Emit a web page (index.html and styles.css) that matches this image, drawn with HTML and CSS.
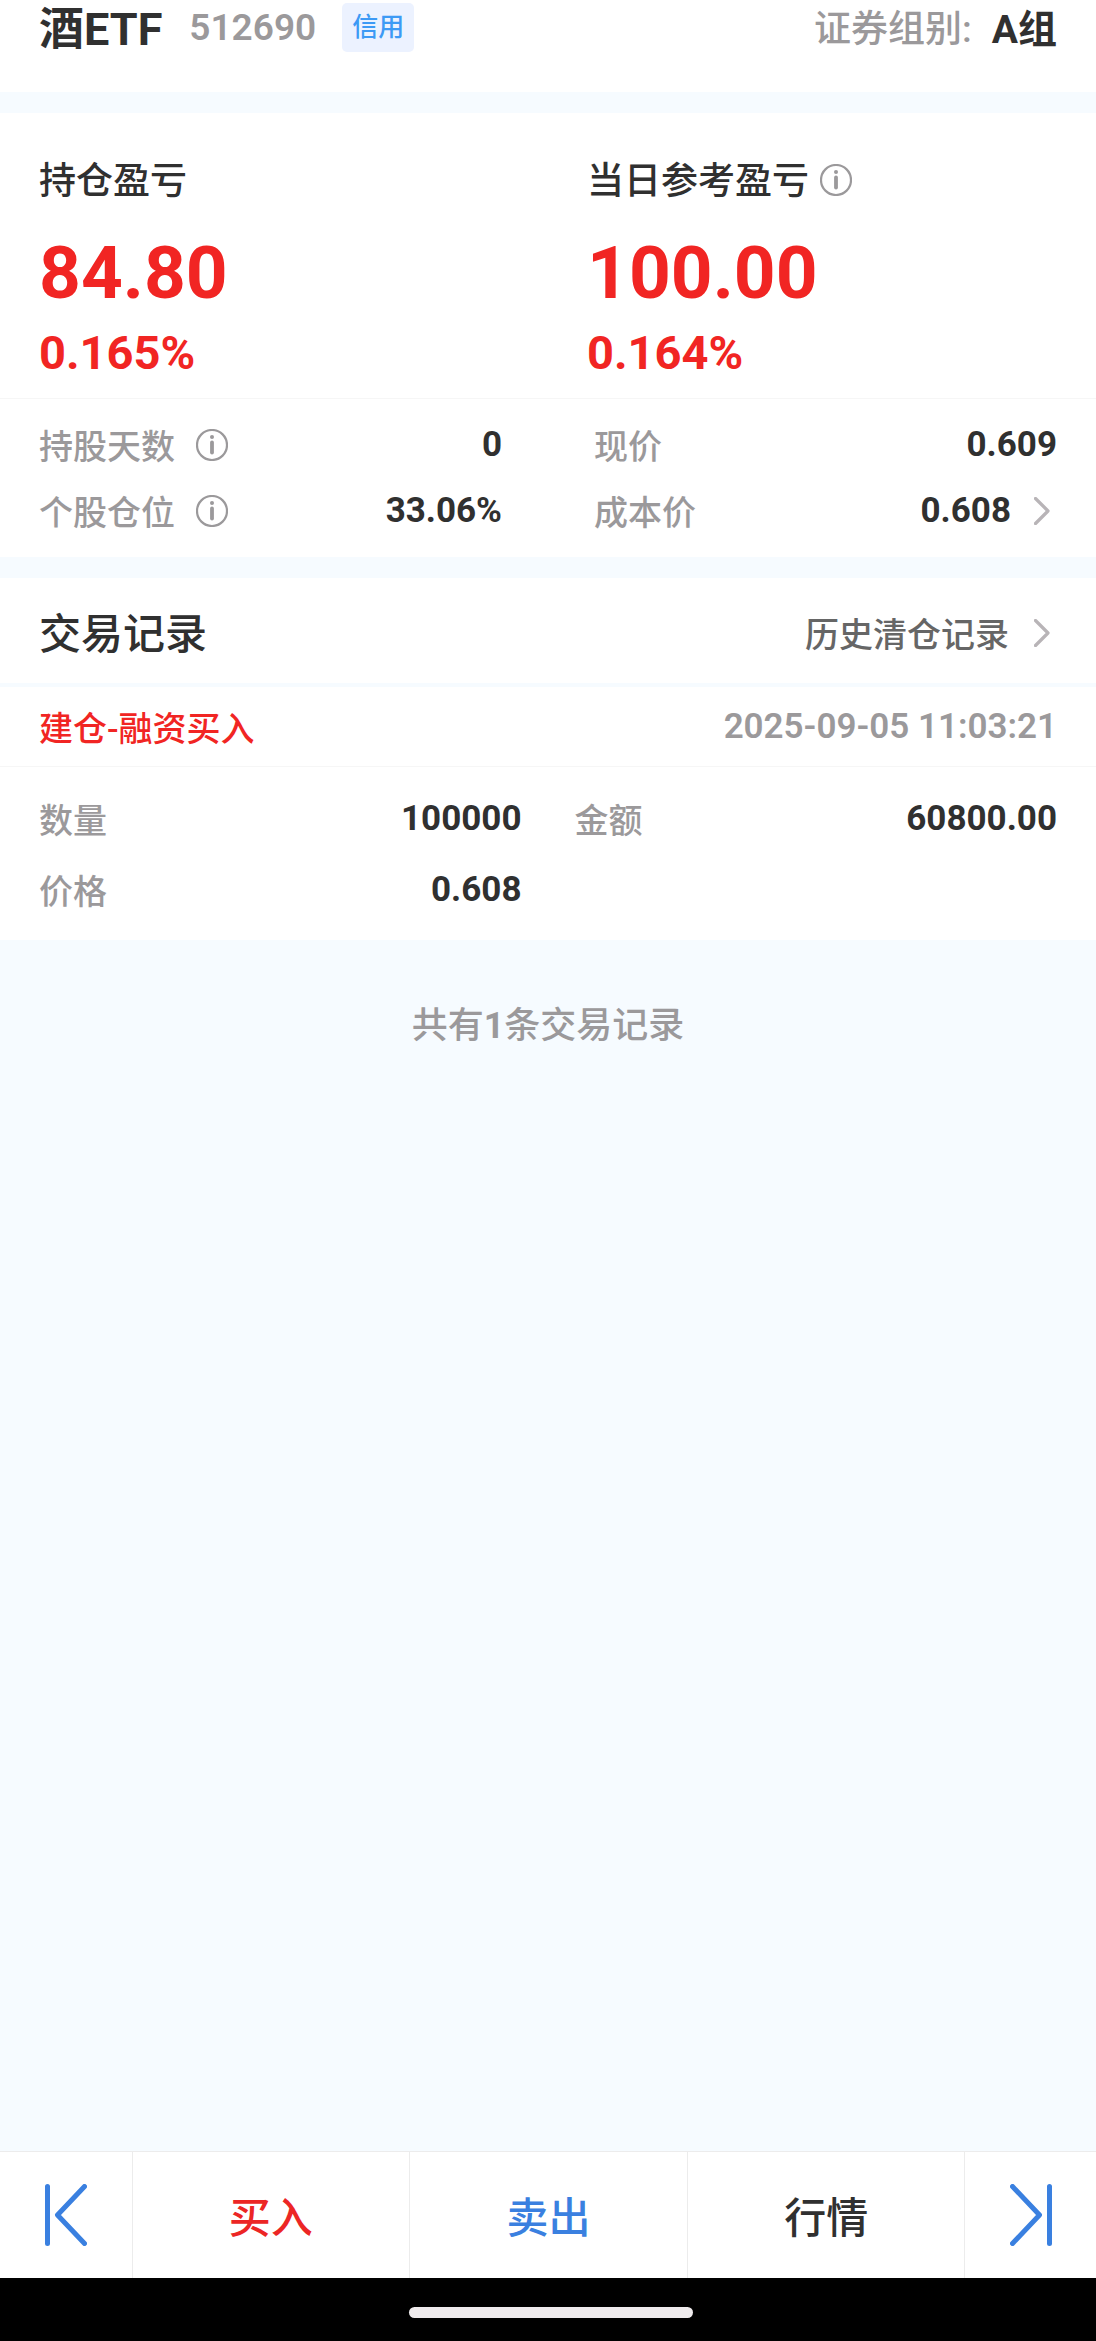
FILE: index.html
```
<!DOCTYPE html>
<html lang="zh-CN">
<head>
  <meta charset="UTF-8">
  <meta name="viewport" content="width=device-width, initial-scale=1">
  <title>酒ETF 512690</title>
  <link rel="stylesheet" href="styles.css">
</head>
<body>

<svg class="sprite" aria-hidden="true">
  <symbol id="icon-info" viewBox="0 0 32 32">
    <circle cx="16" cy="16" r="15" fill="none" stroke="currentColor" stroke-width="2.200"/>
    <circle cx="16" cy="8" r="2" fill="currentColor"/>
    <path d="M16 13.500v10" fill="none" stroke="currentColor" stroke-width="3.800" stroke-linecap="round"/>
  </symbol>
  <symbol id="icon-arrow" viewBox="0 0 16 28">
    <path d="M1.500 1.500 14 14 1.500 26.500" fill="none" stroke="currentColor" stroke-width="3.200" stroke-linecap="round" stroke-linejoin="round"/>
  </symbol>
</svg>

<header class="header">
  <h1 class="name">酒ETF</h1>
  <span class="code">512690</span>
  <span class="tag">信用</span>
  <span class="group">证券组别:</span>
  <strong class="group-name">A组</strong>
</header>

<main class="content">
  <section class="card">
    <div class="profit">
      <div class="profit-item">
        <h2 class="profit-title">持仓盈亏</h2>
        <p class="profit-value">84.80</p>
        <p class="profit-rate">0.165%</p>
      </div>
      <div class="profit-item">
        <h2 class="profit-title">当日参考盈亏
          <button class="info" type="button" aria-label="当日参考盈亏说明"><svg><use href="#icon-info"/></svg></button>
        </h2>
        <p class="profit-value">100.00</p>
        <p class="profit-rate">0.164%</p>
      </div>
    </div>
    <dl class="stats">
      <div class="row">
        <dt>持股天数 <button class="info" type="button" aria-label="持股天数说明"><svg><use href="#icon-info"/></svg></button></dt>
        <dd>0</dd>
      </div>
      <div class="row">
        <dt>现价</dt>
        <dd>0.609</dd>
      </div>
      <div class="row">
        <dt>个股仓位 <button class="info" type="button" aria-label="个股仓位说明"><svg><use href="#icon-info"/></svg></button></dt>
        <dd>33.06%</dd>
      </div>
      <div class="row">
        <dt>成本价</dt>
        <dd><a class="more" href="#cost">0.608 <svg class="arrow"><use href="#icon-arrow"/></svg></a></dd>
      </div>
    </dl>
  </section>

  <section class="card">
    <div class="records-head">
      <h2 class="records-title">交易记录</h2>
      <a class="more history" href="#history">历史清仓记录 <svg class="arrow"><use href="#icon-arrow"/></svg></a>
    </div>
    <div class="record-top">
      <h3 class="record-type">建仓-融资买入</h3>
      <time class="record-time" datetime="2025-09-05T11:03:21">2025-09-05 11:03:21</time>
    </div>
    <dl class="record-detail">
      <div class="row">
        <dt>数量</dt>
        <dd>100000</dd>
      </div>
      <div class="row">
        <dt>金额</dt>
        <dd>60800.00</dd>
      </div>
      <div class="row">
        <dt>价格</dt>
        <dd>0.608</dd>
      </div>
    </dl>
  </section>

  <p class="total">共有<b>1</b>条交易记录</p>
</main>

<nav class="toolbar">
  <button class="step" type="button" aria-label="上一只">
    <svg viewBox="0 0 42 62"><path d="M2.500 2.500v57M39.500 2.500 12.500 31l27 28.500"/></svg>
  </button>
  <button class="action buy" type="button">买入</button>
  <button class="action sell" type="button">卖出</button>
  <button class="action" type="button">行情</button>
  <button class="step" type="button" aria-label="下一只">
    <svg viewBox="0 0 42 62"><path d="M39.500 2.500v57M2.500 2.500 29.500 31l-27 28.500"/></svg>
  </button>
</nav>
<div class="home-bar"><span></span></div>

</body>
</html>
```
FILE: styles.css
```
* {
  box-sizing: border-box;
}
body {
  display: flex;
  flex-direction: column;
  min-height: 100vh;
  margin: 0;
  background-color: #f6fbff;
  color: #303030;
  font-family: Roboto, "Noto Sans CJK SC", sans-serif;
  font-size: 34px;
  font-weight: 500;
}
h1, h2, h3, p, dl, dd {
  margin: 0;
  font-weight: 500;
}
button {
  padding: 0;
  border: none;
  background: none;
  color: inherit;
  font: inherit;
  cursor: pointer;
}
a {
  color: inherit;
  text-decoration: none;
}
.sprite {
  display: none;
}

/* header */
.header {
  display: flex;
  align-items: center;
  height: 92px;
  padding: 0 39px 38px;
  background-color: #fff;
  line-height: 54px;
}
.name {
  padding-top: 5px;
  font-size: 45px;
  font-weight: 700;
}
.code {
  margin-left: 27px;
  padding-top: 2px;
  color: #9b999b;
  font-size: 37px;
  font-weight: 600;
}
.tag {
  margin-left: 26px;
  padding: 0 10px;
  border-radius: 5px;
  background-color: #ecf2ff;
  color: #3d9af5;
  font-size: 26px;
  line-height: 49px;
}
.group {
  margin-left: auto;
  padding-top: 5px;
  color: #9b999b;
  font-size: 37px;
}
.group-name {
  margin-left: 20px;
  padding-top: 5px;
  font-size: 39px;
  font-weight: 700;
}

/* cards */
.content {
  flex: 1;
}
.card {
  margin-top: 21px;
  background-color: #fff;
}
.profit {
  display: grid;
  grid-template-columns: 1fr 1fr;
  padding: 47px 0 17px;
  border-bottom: 1px solid #f6f6f6;
}
.profit-item {
  padding-left: 39px;
}
.profit-title {
  display: flex;
  align-items: center;
  gap: 11px;
  font-size: 37px;
  line-height: 44px;
}
.profit-value {
  margin-top: 25px;
  color: #f12523;
  font-size: 73px;
  font-weight: 700;
  line-height: 88px;
}
.profit-rate {
  margin-top: 8px;
  color: #f12523;
  font-size: 47px;
  font-weight: 700;
  line-height: 56px;
}
.info {
  display: flex;
  margin-bottom: 4px;
  color: #9b999b;
}
.info svg {
  width: 32px;
  height: 32px;
}

/* label / value rows */
.stats,
.record-detail {
  display: grid;
  grid-template-columns: 1fr 1fr;
}
.stats {
  column-gap: 92px;
  padding: 13px 39px;
}
.record-detail {
  column-gap: 53px;
  padding: 16px 39px 15px;
}
.row {
  display: flex;
  align-items: center;
  justify-content: space-between;
  height: 66px;
}
.record-detail .row {
  height: 71px;
}
dt {
  display: flex;
  align-items: center;
  gap: 21px;
  padding-top: 4px;
  color: #9b999b;
  line-height: 40px;
}
dd {
  font-size: 35px;
  font-weight: 700;
  line-height: 40px;
}
.more {
  display: flex;
  align-items: center;
  gap: 23px;
  padding-right: 7px;
}
.arrow {
  width: 16px;
  height: 28px;
  color: #b8b4b7;
}

/* records */
.records-head {
  display: flex;
  align-items: center;
  justify-content: space-between;
  height: 109px;
  padding: 0 39px;
  border-bottom: 4px solid #f6fbff;
}
.records-title {
  font-size: 42px;
}
.history {
  gap: 25px;
  padding-top: 4px;
  color: #666;
}
.record-top {
  display: flex;
  align-items: center;
  justify-content: space-between;
  height: 80px;
  padding: 0 39px;
  border-bottom: 1px solid #f6f6f6;
}
.record-type {
  color: #f12523;
  font-size: 34px;
}
.record-time {
  color: #9b999b;
  font-size: 35px;
  font-weight: 600;
}
.total {
  padding: 62px 0;
  color: #9b999b;
  font-size: 36px;
  line-height: 48px;
  text-align: center;
}

/* bottom toolbar */
.toolbar {
  display: flex;
  height: 127px;
  border-top: 1px solid #ececec;
  background-color: #fff;
}
.toolbar button + button {
  border-left: 1px solid #ececec;
}
.step {
  display: flex;
  align-items: center;
  justify-content: center;
  width: 12%;
  color: #3a80e0;
}
.step svg {
  width: 42px;
  height: 62px;
  fill: none;
  stroke: currentColor;
  stroke-width: 5;
  stroke-linecap: round;
  stroke-linejoin: round;
}
.action {
  flex: 1;
  padding-bottom: 2px;
  font-size: 42px;
}
.buy {
  color: #ec2625;
}
.sell {
  color: #3a80e0;
}
.home-bar {
  display: flex;
  justify-content: center;
  padding: 29px 0 23px 6px;
  background-color: #000;
}
.home-bar span {
  width: 26%;
  height: 11px;
  border-radius: 6px;
  background-color: #efebed;
}
```
